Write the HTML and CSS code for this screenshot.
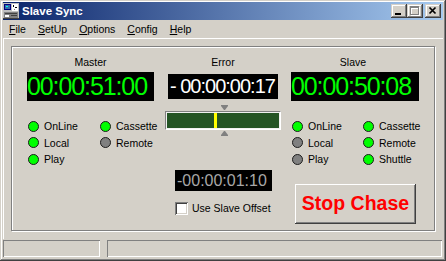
FILE: index.html
```html
<!DOCTYPE html>
<html>
<head>
<meta charset="utf-8">
<link rel="stylesheet" href="styles.css">
</head>
<body>
<div class="window">
  <div class="titlebar">
    <svg class="app-icon" width="16" height="16" viewBox="0 0 16 16">
      <rect x="0" y="0" width="16" height="16" fill="#c0c0c0"/>
      <rect x="1" y="1" width="7" height="6" fill="#000080"/>
      <rect x="2" y="2" width="5" height="4" fill="#3a6ea5"/>
      <rect x="3" y="3" width="2" height="1" fill="#00ffff"/>
      <rect x="9" y="1" width="6" height="7" fill="#ffffff"/>
      <rect x="10" y="2" width="1" height="2" fill="#000"/>
      <rect x="12" y="4" width="2" height="1" fill="#000"/>
      <rect x="11" y="6" width="1" height="1" fill="#808080"/>
      <rect x="1" y="9" width="14" height="6" fill="#808080"/>
      <rect x="2" y="10" width="12" height="1" fill="#404040"/>
      <rect x="2" y="12" width="4" height="2" fill="#ffffff"/>
      <rect x="8" y="12" width="6" height="1" fill="#404040"/>
      <rect x="0" y="15" width="16" height="1" fill="#404040"/>
    </svg>
    <span class="title">Slave Sync</span>
    <div class="caption-buttons">
      <span class="cbtn"><svg width="16" height="14" viewBox="0 0 16 14"><rect x="4" y="9" width="6" height="2" fill="#000"/></svg></span>
      <span class="cbtn"><svg width="16" height="14" viewBox="0 0 16 14"><path fill-rule="evenodd" fill="#ffffff" d="M4 3h9v9H4z M5 5h7v6H5z"/><path fill-rule="evenodd" fill="#808080" d="M3 2h9v9H3z M4 4h7v6H4z"/></svg></span>
      <span class="cbtn cbtn-close"><svg width="16" height="14" viewBox="0 0 16 14"><path d="M4.5 3.5 L10.5 9.5 M10.5 3.5 L4.5 9.5" stroke="#000" stroke-width="1.7" fill="none"/></svg></span>
    </div>
  </div>

  <div class="menubar">
    <span class="menu"><u>F</u>ile</span>
    <span class="menu"><u>S</u>etUp</span>
    <span class="menu"><u>O</u>ptions</span>
    <span class="menu"><u>C</u>onfig</span>
    <span class="menu"><u>H</u>elp</span>
  </div>

  <div class="client">
    <div class="groupbox">
      <div class="col col-master">
        <div class="label">Master</div>
        <div class="display display-big">00:00:51:00</div>
        <div class="leds">
          <div class="led-item"><span class="led on"></span>OnLine</div>
          <div class="led-item"><span class="led on"></span>Cassette</div>
          <div class="led-item"><span class="led on"></span>Local</div>
          <div class="led-item"><span class="led off"></span>Remote</div>
          <div class="led-item"><span class="led on"></span>Play</div>
        </div>
      </div>

      <div class="col col-error">
        <div class="label">Error</div>
        <div class="display display-error">- 00:00:00:17</div>
        <div class="meter">
          <svg class="tick tick-top" width="7" height="5" viewBox="0 0 7 5"><path d="M0 0h7v1l-3 4h-1l-3-4z" fill="#808080"/></svg>
          <span class="needle"></span>
          <svg class="tick tick-bottom" width="7" height="5" viewBox="0 0 7 5"><path d="M0 5h7v-1l-3-4h-1l-3 4z" fill="#808080"/></svg>
        </div>
        <div class="display display-offset">-00:00:01:10</div>
        <div class="check-row">
          <span class="checkbox"></span>
          <span class="check-label">Use Slave Offset</span>
        </div>
      </div>

      <div class="col col-slave">
        <div class="label label-slave">Slave</div>
        <div class="display display-big">00:00:50:08</div>
        <div class="leds leds-slave">
          <div class="led-item"><span class="led on"></span>OnLine</div>
          <div class="led-item"><span class="led on"></span>Cassette</div>
          <div class="led-item"><span class="led off"></span>Local</div>
          <div class="led-item"><span class="led on"></span>Remote</div>
          <div class="led-item"><span class="led off"></span>Play</div>
          <div class="led-item"><span class="led on"></span>Shuttle</div>
        </div>
        <div class="stop-button">Stop Chase</div>
      </div>
    </div>
  </div>

  <div class="statusbar">
    <div class="status-panel status-first"></div>
    <div class="status-panel status-rest"></div>
  </div>
</div>
</body>
</html>
```

FILE: styles.css
```css
html, body {
  margin: 0;
  padding: 0;
  background: #d4d0c8;
}

.window {
  width: 446px;
  height: 261px;
  box-sizing: border-box;
  padding: 2px 3px 4px 3px;
  background: #d4d0c8;
  box-shadow: inset -1px -1px 0 #404040, inset 1px 1px 0 #d4d0c8,
              inset -2px -2px 0 #808080, inset 2px 2px 0 #ffffff;
  font-family: "Liberation Sans", Arial, sans-serif;
  font-size: 10.5px;
  color: #000;
  display: flex;
  flex-direction: column;
}

/* Title bar */
.titlebar {
  height: 18px;
  flex: none;
  display: flex;
  align-items: center;
  background: linear-gradient(to right, #0a246a, #a6caf0);
}

.app-icon {
  flex: none;
  margin-left: 0;
  display: block;
}

.title {
  margin-left: 3px;
  color: #fff;
  font-weight: bold;
  font-size: 11.5px;
  line-height: 18px;
}

.caption-buttons {
  margin-left: auto;
  margin-right: 2px;
  display: flex;
}

.cbtn {
  width: 16px;
  height: 14px;
  display: block;
  background: #d4d0c8;
  box-shadow: inset -1px -1px 0 #404040, inset 1px 1px 0 #d4d0c8,
              inset -2px -2px 0 #808080, inset 2px 2px 0 #ffffff;
}

.cbtn svg {
  display: block;
}

.cbtn-close {
  margin-left: 2px;
}

/* Menu bar */
.menubar {
  height: 18px;
  flex: none;
  display: flex;
  align-items: center;
  gap: 12px;
  padding-left: 6px;
  font-size: 10.5px;
}

.menu u {
  text-decoration: underline;
  text-underline-offset: 1px;
}

/* Client area */
.client {
  height: 201px;
  flex: none;
  box-sizing: border-box;
  border-top: 1px solid #ffffff;
  border-left: 1px solid #ffffff;
  padding-top: 7px;
  padding-left: 7px;
}

.groupbox {
  width: 424px;
  height: 185px;
  box-sizing: border-box;
  border: 1px solid #808080;
  box-shadow: inset 1px 1px 0 #ffffff, 1px 1px 0 #ffffff;
  display: flex;
  align-items: flex-start;
  padding-left: 15px;
  padding-top: 8px;
}

.col {
  display: flex;
  flex-direction: column;
  align-items: flex-start;
}

.col-master {
  width: 127px;
}

.col-error {
  width: 116px;
  margin-left: 11px;
}

.col-slave {
  width: 128px;
  margin-left: 10px;
}

.label {
  align-self: stretch;
  text-align: center;
  line-height: 14px;
  height: 14px;
}

.label-slave {
  padding-right: 4px;
}

.display {
  background: #000;
  white-space: nowrap;
  overflow: hidden;
}

.display-big {
  width: 127px;
  height: 29px;
  margin-top: 3px;
  color: #00ff00;
  font-size: 25px;
  line-height: 29px;
  letter-spacing: -1.1px;
}

.col-slave .display-big {
  width: 128px;
}

.display-error {
  width: 110px;
  height: 25px;
  margin: 5px auto 0 auto;
  align-self: center;
  box-sizing: border-box;
  padding-left: 2px;
  color: #ffffff;
  font-size: 20px;
  line-height: 25px;
  letter-spacing: -1px;
}

.display-offset {
  width: 97px;
  height: 21px;
  margin-top: 40px;
  margin-left: 10px;
  box-sizing: border-box;
  padding-left: 2px;
  color: #a8a8a8;
  font-size: 16px;
  line-height: 21px;
}

/* LEDs */
.leds {
  margin-top: 17px;
  display: grid;
  grid-template-columns: 72px auto;
  grid-auto-rows: 16.5px;
  padding-left: 1px;
}

.leds-slave {
  grid-template-columns: 71px auto;
}

.led-item {
  display: flex;
  align-items: center;
  gap: 5px;
  white-space: nowrap;
  line-height: 16.5px;
}

.led {
  width: 11px;
  height: 11px;
  box-sizing: border-box;
  border-radius: 50%;
  border: 1px solid #1c1c1c;
  flex: none;
}

.led.on {
  background: #00ff00;
}

.led.off {
  background: #808080;
}

/* Meter */
.meter {
  position: relative;
  width: 116px;
  height: 19px;
  margin-top: 12px;
  box-sizing: border-box;
  border: 1px solid;
  border-color: #808080 #ffffff #ffffff #808080;
  background: #245424;
  box-shadow: inset 0 0 0 1px #f0f0f0;
}

.needle {
  position: absolute;
  left: 48px;
  top: 1px;
  width: 3px;
  height: 15px;
  background: #ffff00;
}

.tick {
  position: absolute;
  left: 55px;
  display: block;
}

.tick-top {
  top: -7px;
}

.tick-bottom {
  top: 19px;
}

/* Checkbox */
.check-row {
  margin-top: 11px;
  margin-left: 10px;
  display: flex;
  align-items: center;
  gap: 4px;
  height: 13px;
}

.checkbox {
  width: 13px;
  height: 13px;
  background: #ffffff;
  box-shadow: inset 1px 1px 0 #808080, inset -1px -1px 0 #ffffff,
              inset 2px 2px 0 #404040, inset -2px -2px 0 #d4d0c8;
  flex: none;
}

.check-label {
  line-height: 13px;
  white-space: nowrap;
}

/* Stop button */
.stop-button {
  width: 121px;
  height: 40px;
  margin-top: 16.5px;
  margin-left: 4px;
  box-sizing: border-box;
  background: #d4d0c8;
  box-shadow: inset -1px -1px 0 #404040, inset 1px 1px 0 #ffffff,
              inset -2px -2px 0 #808080, inset 2px 2px 0 #d4d0c8;
  color: #ff0000;
  font-weight: bold;
  font-size: 19.5px;
  line-height: 38px;
  text-align: center;
  white-space: nowrap;
}

/* Status bar */
.statusbar {
  height: 17px;
  flex: none;
  margin-top: 1px;
  display: flex;
  gap: 7px;
}

.status-panel {
  box-shadow: inset 1px 1px 0 #808080, inset -1px -1px 0 #ffffff;
}

.status-first {
  width: 97px;
}

.status-rest {
  flex: 1;
  margin-right: 1px;
}
```
